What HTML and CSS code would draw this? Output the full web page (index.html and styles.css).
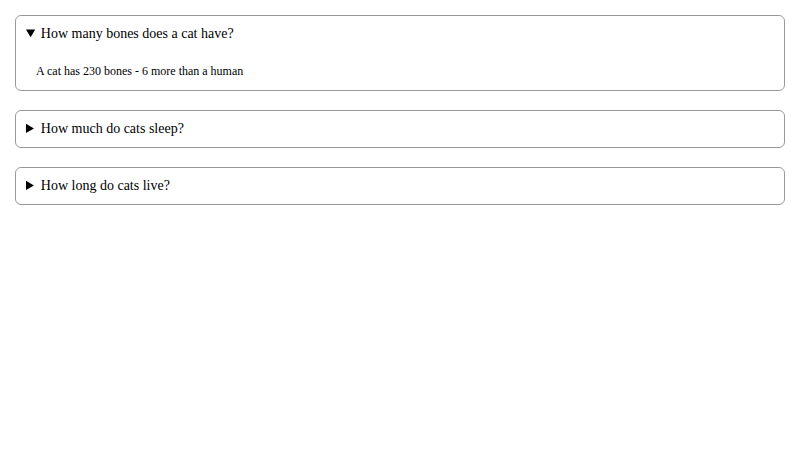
FILE: index.html
```html
<!DOCTYPE html>
<html lang="en">
<head>
  <meta charset="UTF-8">
  <meta name="viewport" content="width=device-width, initial-scale=1.0">
  <title>Cat FAQ</title>
  <link rel="stylesheet" href="styles.css">
</head>
<body>
  <details class="faq" open>
    <summary>How many bones does a cat have?</summary>
    <p class="answer">A cat has 230 bones - 6 more than a human</p>
  </details>

  <details class="faq">
    <summary>How much do cats sleep?</summary>
    <p class="answer">Cats sleep for around 13 to 16 hours a day</p>
  </details>

  <details class="faq">
    <summary>How long do cats live?</summary>
    <p class="answer">Cats usually live for 12 to 18 years</p>
  </details>
</body>
</html>
```

FILE: styles.css
```css
body {
  margin: 15px;
  font-family: "Liberation Serif", serif;
  background-color: #fff;
  color: #000;
}

.faq {
  margin-bottom: 19px;
  padding: 10px;
  border: 1px solid #999;
  border-radius: 6px;
}

.faq summary {
  font-size: 14px;
  cursor: pointer;
}

.answer {
  margin: 22px 10px 1px;
  font-size: 12px;
}
```
